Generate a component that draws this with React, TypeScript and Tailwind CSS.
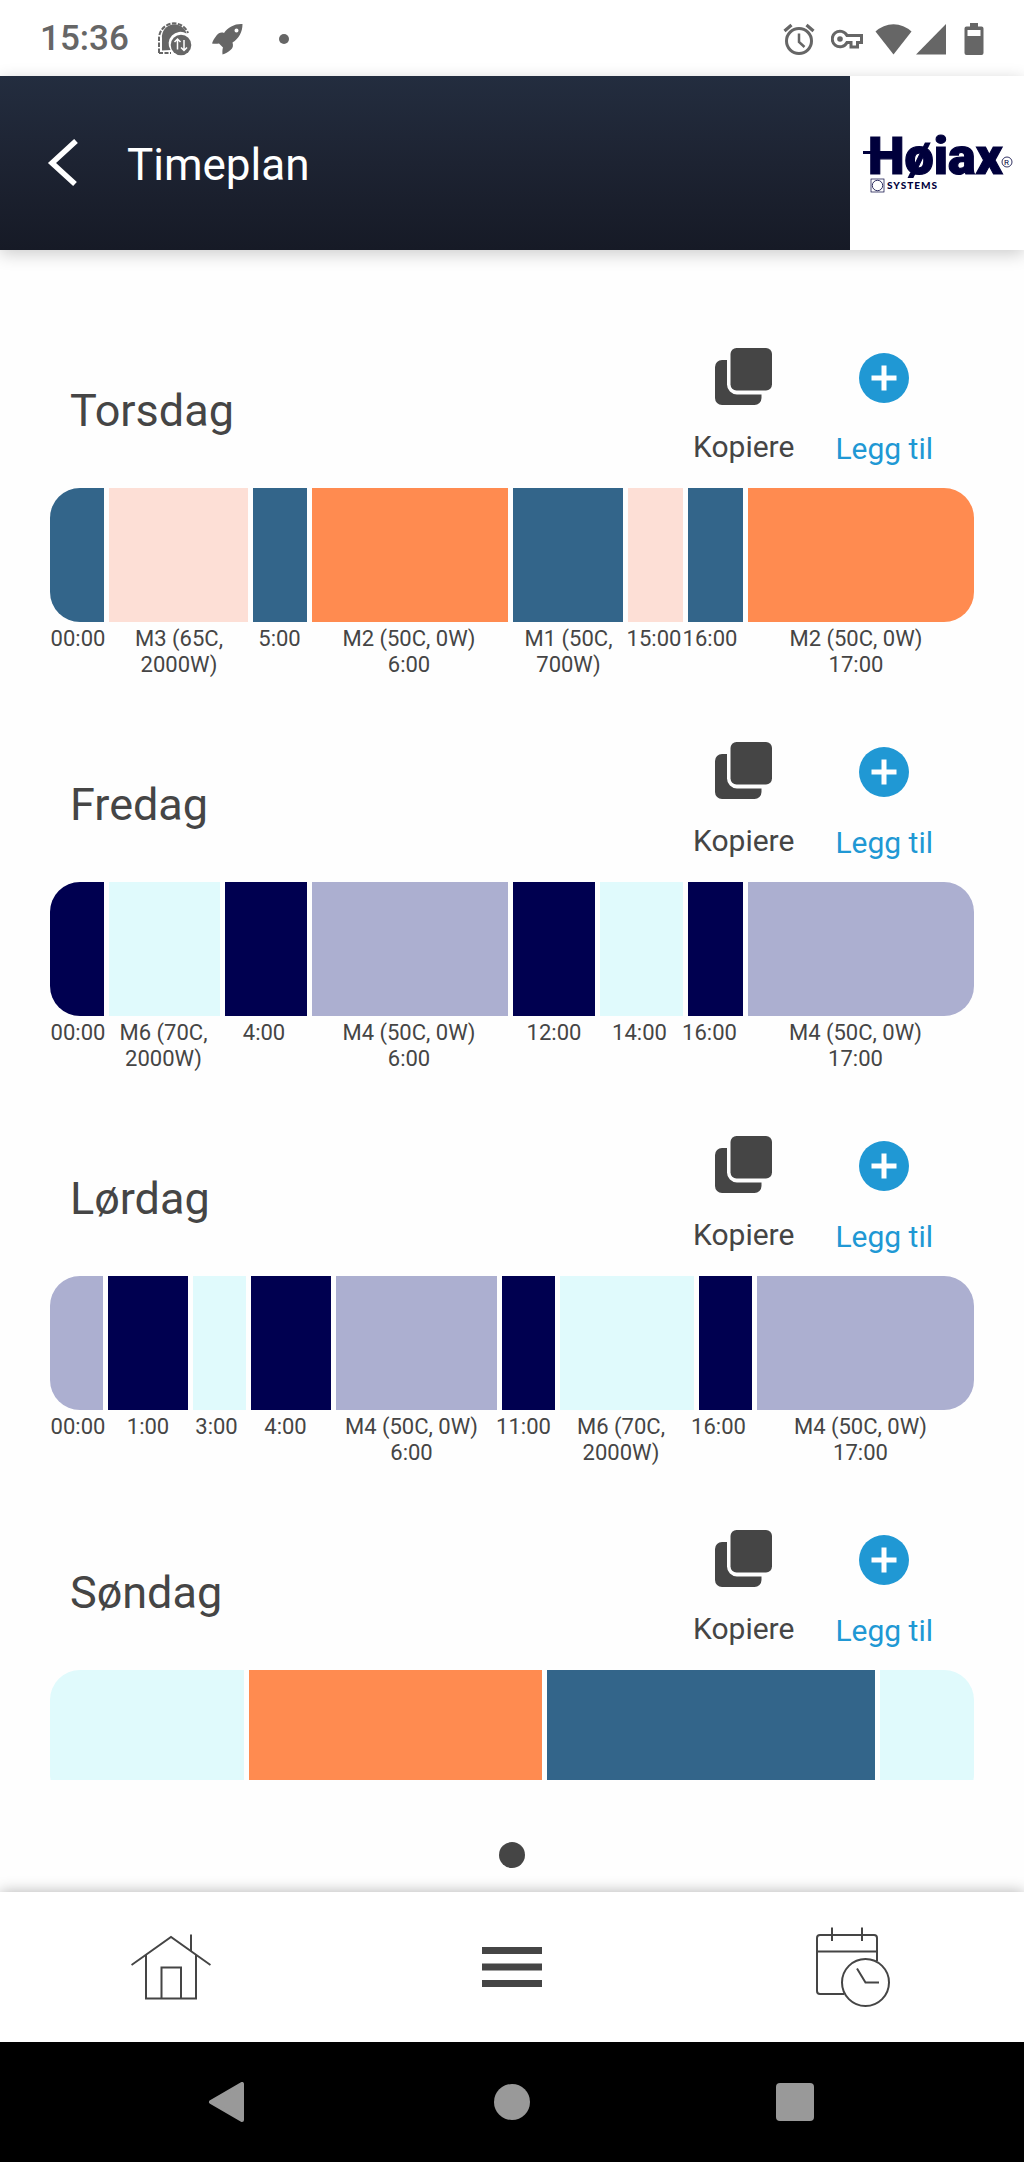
import React from "react";

type Segment = { width: number; color: string };
type Label = { width: number; lines: string[] };
type Day = { name: string; segments: Segment[]; labels: Label[] };

const BLUE = "bg-[#33658a]";
const ORANGE = "bg-[#ff8b50]";
const PEACH = "bg-[#fddfd6]";
const NAVY = "bg-[#000050]";
const LILAC = "bg-[#acafd0]";
const ICE = "bg-[#e0fafc]";

const seg = (width: number, color: string): Segment => ({ width, color });
const label = (width: number, ...lines: string[]): Label => ({ width, lines });

const days: Day[] = [
  {
    name: "Torsdag",
    segments: [
      seg(54, BLUE), seg(139, PEACH), seg(54, BLUE), seg(196, ORANGE),
      seg(110, BLUE), seg(55, PEACH), seg(55, BLUE), seg(226, ORANGE),
    ],
    labels: [
      label(56, "00:00"), label(146, "M3 (65C,", "2000W)"), label(55, "5:00"),
      label(204, "M2 (50C, 0W)", "6:00"), label(115, "M1 (50C,", "700W)"),
      label(56, "15:00"), label(56, "16:00"), label(236, "M2 (50C, 0W)", "17:00"),
    ],
  },
  {
    name: "Fredag",
    segments: [
      seg(54, NAVY), seg(111, ICE), seg(82, NAVY), seg(196, LILAC),
      seg(82, NAVY), seg(83, ICE), seg(55, NAVY), seg(226, LILAC),
    ],
    labels: [
      label(56, "00:00"), label(115, "M6 (70C,", "2000W)"), label(86, "4:00"),
      label(204, "M4 (50C, 0W)", "6:00"), label(86, "12:00"), label(85, "14:00"),
      label(55, "16:00"), label(237, "M4 (50C, 0W)", "17:00"),
    ],
  },
  {
    name: "Lørdag",
    segments: [
      seg(53, LILAC), seg(80, NAVY), seg(53, ICE), seg(80, NAVY), seg(161, LILAC),
      seg(53, NAVY), seg(134, ICE), seg(53, NAVY), seg(217, LILAC),
    ],
    labels: [
      label(56, "00:00"), label(84, "1:00"), label(53, "3:00"), label(85, "4:00"),
      label(167, "M4 (50C, 0W)", "6:00"), label(57, "11:00"), label(138, "M6 (70C,", "2000W)"),
      label(57, "16:00"), label(227, "M4 (50C, 0W)", "17:00"),
    ],
  },
  {
    name: "Søndag",
    segments: [seg(194, ICE), seg(293, ORANGE), seg(328, BLUE), seg(94, ICE)],
    labels: [],
  },
];

function StatusBar() {
  return (
    <div className="flex h-[76px] items-center justify-between bg-white px-10 pt-[2px] text-[#666666]">
      <div className="flex items-center">
        <span className="text-[35px] leading-10 font-medium">15:36</span>
        <svg className="ml-7 h-9 w-9" viewBox="0 0 36 36" aria-hidden="true">
          <path d="M2 32V17a15 15 0 0 1 29-5" fill="none" stroke="currentColor" strokeWidth="2" strokeDasharray="4.500 1.500" />
          <path d="M2 32h12" fill="none" stroke="currentColor" strokeWidth="2" strokeDasharray="4 1.500" />
          <path d="M5 28V17A12.500 12.500 0 0 1 29.500 12.500A11.800 11.800 0 0 0 13.500 29L5 29.500Z" fill="currentColor" />
          <circle cx="24" cy="24" r="10.300" fill="currentColor" />
          <path d="M20.500 28.500v-10M17.500 21l3-3 3 3M27 19v10.500M24 26.500l3 3 3-3" fill="none" stroke="white" strokeWidth="1.500" />
        </svg>
        <svg className="ml-[18px] h-8 w-8" viewBox="0 0 32 32" aria-hidden="true">
          <path
            fillRule="evenodd"
            d="M31.500 1C24 .500 17 4 13 10c-3-1-5.500 0-7.500 2.500C3.500 15 2 17.500 1 20.500c2.500.300 5 .200 7 0l4 4c-.700 2-.700 4.300-.500 7 3-.800 5.500-2.300 8-4.500 2.500-2 3-4.500 2-7.500C28 15.500 31.500 9 31.500 1ZM25.500 5.500a2 2 0 1 1 0 4 2 2 0 0 1 0-4Z"
            fill="currentColor"
          />
        </svg>
        <span className="ml-9 h-[10px] w-[10px] rounded-full bg-[#666666]" />
      </div>
      <div className="flex items-center">
        <svg className="h-8 w-8" viewBox="0 0 32 32" fill="none" stroke="currentColor" aria-hidden="true">
          <circle cx="16" cy="18" r="12.500" strokeWidth="3" />
          <path d="M16 10.500V19l5.500 5" strokeWidth="2.500" />
          <path d="M1.500 8 8.500 2M30.500 8l-7-6" strokeWidth="3.200" />
        </svg>
        <svg className="ml-4 h-5 w-8" viewBox="0 0 32 20" fill="none" stroke="currentColor" aria-hidden="true">
          <path d="M16 6.500A7.800 7.800 0 1 0 16 13.500h4V18h6.500v-4.500h4v-7H16Z" strokeWidth="3" />
          <circle cx="9" cy="10" r="2.800" fill="currentColor" stroke="none" />
        </svg>
        <svg className="ml-3 h-8 w-[37px]" viewBox="0 0 37 32" aria-hidden="true">
          <path d="M.500 8.500A26 26 0 0 1 36.500 8.500L18.500 31.500Z" fill="currentColor" />
        </svg>
        <svg className="ml-1 h-8 w-[30px]" viewBox="0 0 30 32" aria-hidden="true">
          <path d="M30 1v30.500H0Z" fill="currentColor" />
        </svg>
        <svg className="ml-[18px] h-8 w-5" viewBox="0 0 20 32" aria-hidden="true">
          <path
            fillRule="evenodd"
            d="M6 0h8v3.500h3.500a2 2 0 0 1 2 2V30a2 2 0 0 1-2 2h-15a2 2 0 0 1-2-2V5.500a2 2 0 0 1 2-2H6ZM3.500 7v6h13V7Z"
            fill="currentColor"
          />
        </svg>
      </div>
    </div>
  );
}

function Logo() {
  return (
    <svg className="h-[174px] w-[174px] shrink-0 bg-white" viewBox="0 0 174 174" role="img" aria-label="Høiax Systems">
      <g fill="#00003c">
        <rect x="13" y="75" width="32" height="3" />
        <text x="18" y="98" stroke="#00003c" strokeWidth="1.200" className="font-['Roboto'] text-[52px] font-black">Høiax</text>
        <text x="37" y="113" className="font-['Lato'] text-[10px] font-black tracking-widest">SYSTEMS</text>
        <text x="154" y="89" className="font-['Roboto'] text-[8px]">R</text>
      </g>
      <g fill="none" stroke="#00003c">
        <circle cx="157" cy="86" r="5" strokeWidth="0.800" />
        <rect x="21" y="103" width="13" height="13" strokeWidth="0.700" />
        <circle cx="27.500" cy="109.500" r="5.200" strokeWidth="0.800" />
      </g>
    </svg>
  );
}

function Header() {
  return (
    <header className="relative z-10 flex h-[174px] items-center bg-linear-to-b from-[#232d3f] via-[#1d2332] to-[#161a26] shadow-[0_4px_16px_rgba(0,0,0,0.2)]">
      <button type="button" aria-label="Tilbake" className="ml-[47px] text-white">
        <svg className="h-12 w-8" viewBox="0 0 32 48" fill="none" stroke="currentColor" strokeWidth="5.500" aria-hidden="true">
          <path d="M29 2 5 24l23 21" />
        </svg>
      </button>
      <h1 className="ml-12 flex-1 pt-1 text-[44px] leading-[52px] text-white">Timeplan</h1>
      <Logo />
    </header>
  );
}

function DayActions() {
  return (
    <div className="flex items-start gap-[41px] pr-[41px] text-[30px] leading-9">
      <button type="button" className="flex flex-col items-center gap-6 pt-[10px] text-[#454545]">
        <svg className="h-[57px] w-[57px]" viewBox="0 0 57 57" fill="currentColor" aria-hidden="true">
          <rect x="15.500" y="0" width="41.500" height="42.500" rx="6" />
          <path d="M12 12H7a7 7 0 0 0-7 7v31a7 7 0 0 0 7 7h32.500a7 7 0 0 0 7-7v-3.500H22A10 10 0 0 1 12 36.500Z" />
        </svg>
        Kopiere
      </button>
      <button type="button" className="flex flex-col items-center gap-7 pt-[15px] text-[#2098d4]">
        <svg className="h-[50px] w-[50px]" viewBox="0 0 50 50" aria-hidden="true">
          <circle cx="25" cy="25" r="25" fill="currentColor" />
          <path d="M25 12.500v25M12.500 25h25" stroke="white" strokeWidth="5" />
        </svg>
        Legg til
      </button>
    </div>
  );
}

function DaySection({ day, cut }: { day: Day; cut: boolean }) {
  return (
    <section>
      <div className="flex h-[150px] items-start justify-between pl-5">
        <h2 className="pt-[47px] text-[45px] leading-[52px]">{day.name}</h2>
        <DayActions />
      </div>
      <div className={cut ? "h-[110px] overflow-hidden" : ""}>
        <div className="flex h-[134px] gap-[5px] overflow-hidden rounded-[30px]">
          {day.segments.map((s, i) => (
            <div key={i} className={`basis-0 ${s.color}`} style={{ flexGrow: s.width }} />
          ))}
        </div>
      </div>
      {day.labels.length > 0 && (
        <div className="flex pt-1 text-center text-[22px] leading-[26px]">
          {day.labels.map((l, i) => (
            <div key={i} className="min-w-0 basis-0 whitespace-nowrap" style={{ flexGrow: l.width }}>
              {l.lines.map((line) => (
                <p key={line}>{line}</p>
              ))}
            </div>
          ))}
        </div>
      )}
    </section>
  );
}

function TabBar() {
  return (
    <nav className="grid h-[150px] grid-cols-3 items-center justify-items-center bg-white text-[#454545] shadow-[0_0_14px_rgba(0,0,0,0.3)]">
      <a href="#home" aria-label="Hjem">
        <svg className="h-[66px] w-20" viewBox="0 0 80 66" fill="none" stroke="currentColor" strokeWidth="2" aria-hidden="true">
          <path d="M.500 31 40 3l39.500 28M60 .500V17M15 21v43.500h50V21M30.500 64.500v-31h19.500v31" />
        </svg>
      </a>
      <button type="button" aria-label="Meny">
        <svg className="h-10 w-[60px]" viewBox="0 0 60 40" fill="currentColor" aria-hidden="true">
          <path d="M0 0h60v7H0zM0 16.500h60v7H0zM0 33h60v7H0z" />
        </svg>
      </button>
      <a href="#schedule" aria-label="Timeplan">
        <svg className="h-20 w-[74px]" viewBox="0 0 74 80" fill="none" stroke="currentColor" strokeWidth="2" aria-hidden="true">
          <path d="M28 67H4a3 3 0 0 1-3-3V11a3 3 0 0 1 3-3h54a3 3 0 0 1 3 3v23M1 24.500h60M16 .500V14M46 .500V14" />
          <circle cx="49.500" cy="55.500" r="23.500" />
          <path d="M41 41.500l8.500 14H63" />
        </svg>
      </a>
    </nav>
  );
}

function SystemBar() {
  return (
    <div className="flex h-[120px] items-center justify-center bg-black text-[#999999]">
      <button type="button" aria-label="Back" className="flex w-[283px] justify-center">
        <svg className="h-10 w-[42px]" viewBox="0 0 42 40" aria-hidden="true">
          <path d="M3 20 34 2v36Z" fill="currentColor" stroke="currentColor" strokeWidth="4" strokeLinejoin="round" />
        </svg>
      </button>
      <button type="button" aria-label="Home" className="flex w-[283px] justify-center">
        <span className="h-9 w-9 rounded-full bg-[#999999]" />
      </button>
      <button type="button" aria-label="Recent apps" className="flex w-[283px] justify-center">
        <span className="h-[38px] w-[38px] rounded bg-[#999999]" />
      </button>
    </div>
  );
}

export default function App() {
  return (
    <div className="flex min-h-screen flex-col bg-[#fefefe] font-['Roboto',sans-serif] text-[#454545]">
      <StatusBar />
      <Header />
      <main className="flex flex-1 flex-col px-[50px] pt-[88px]">
        <div className="flex flex-col gap-[54px]">
          {days.map((day, i) => (
            <DaySection key={day.name} day={day} cut={i === days.length - 1} />
          ))}
        </div>
        <span className="mx-auto mt-auto mb-6 h-[26px] w-[26px] rounded-full bg-[#454545]" />
      </main>
      <TabBar />
      <SystemBar />
    </div>
  );
}
